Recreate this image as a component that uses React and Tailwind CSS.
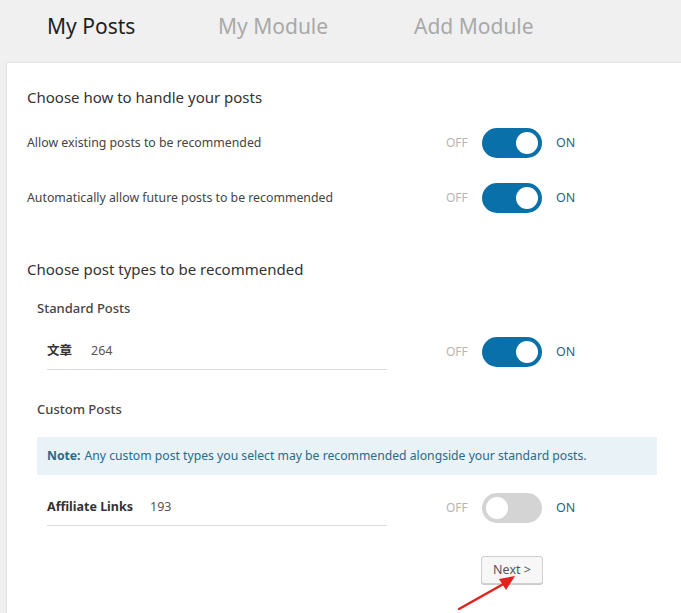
import React from "react";

function Toggle({ on }) {
  return (
    <div className="flex items-center w-[140px] shrink-0">
      <span className="text-[12px] text-[#b5b5b5] w-[36px]">OFF</span>
      <div
        className={
          on
            ? "relative w-[60px] h-[30px] rounded-full bg-[#0a70a9]"
            : "relative w-[60px] h-[30px] rounded-full bg-[#d4d4d4]"
        }
      >
        <div
          className={
            on
              ? "absolute top-[4px] right-[4px] w-[22px] h-[22px] rounded-full bg-white"
              : "absolute top-[4px] left-[4px] w-[22px] h-[22px] rounded-full bg-white"
          }
        ></div>
      </div>
      <span className="text-[12.5px] text-[#1f6585] ml-[14px]">ON</span>
    </div>
  );
}

export default function App() {
  return (
    <div
      className="relative min-h-screen bg-[#f0f0f0] flex flex-col overflow-hidden"
      style={{ fontFamily: '"Noto Sans", "Noto Sans CJK SC", sans-serif' }}
    >
      {/* tabs */}
      <div className="h-[62px] flex items-center pl-[47px] pb-[8px] text-[21px] shrink-0">
        <span className="text-[#1e1e1e] w-[171px]">My Posts</span>
        <span className="text-[#a9a9a9] w-[196px]">My Module</span>
        <span className="text-[#a9a9a9]">Add Module</span>
      </div>

      {/* panel */}
      <div className="flex-1 ml-[6px] bg-white border-l border-t border-[#e3e3e3] pl-[20px] pt-[24px] pb-10">
        <h2 className="h-5 leading-5 text-[15px] text-[#333]">Choose how to handle your posts</h2>

        <div className="flex items-center h-[30px] mt-[21px]">
          <div className="w-[419px] text-[12.3px] text-[#444]">Allow existing posts to be recommended</div>
          <Toggle on />
        </div>
        <div className="flex items-center h-[30px] mt-[25px]">
          <div className="w-[419px] text-[12.3px] text-[#444]">Automatically allow future posts to be recommended</div>
          <Toggle on />
        </div>

        <h2 className="h-5 leading-5 text-[15px] text-[#333] mt-[46px]">Choose post types to be recommended</h2>

        <div className="pl-[10px]">
          <h3 className="h-5 leading-5 text-[13px] font-medium text-[#444] mt-[19px]">Standard Posts</h3>

          <div className="flex items-center h-[36px] mt-[16px]">
            <div className="pl-[10px] w-[409px]">
              <div className="flex items-center h-[36px] w-[340px] border-b border-[#dcdcdc] text-[12.5px]">
                <span className="font-bold text-[#333] w-[44px]">文章</span>
                <span className="text-[#555]">264</span>
              </div>
            </div>
            <Toggle on />
          </div>

          <h3 className="h-5 leading-5 text-[13px] font-medium text-[#444] mt-[29px]">Custom Posts</h3>

          <div className="mt-[18px] h-[38px] w-[620px] bg-[#e8f2f7] flex items-center pl-[10px] text-[12.2px] text-[#2b6a8a]">
            <span className="font-bold mr-1">Note:</span>
            <span>Any custom post types you select may be recommended alongside your standard posts.</span>
          </div>

          <div className="flex items-center h-[36px] mt-[15px]">
            <div className="pl-[10px] w-[409px]">
              <div className="flex items-center h-[36px] w-[340px] border-b border-[#dcdcdc] text-[12.5px]">
                <span className="font-bold text-[#333] w-[103px]">Affiliate Links</span>
                <span className="text-[#555]">193</span>
              </div>
            </div>
            <Toggle />
          </div>

          <div className="mt-[30px] pl-[444px]">
            <button className="w-[62px] h-[28px] bg-[#f7f7f7] border border-[#cfcfcf] rounded-[3px] text-[12.5px] text-[#555] shadow-[0_1px_0_#ccc]">
              Next &gt;
            </button>
          </div>
        </div>
      </div>

      {/* annotation arrow */}
      <svg className="absolute left-[455px] top-[570px]" width="70" height="43" viewBox="0 0 70 43">
        <line x1="4" y1="39" x2="52" y2="12" stroke="#e3201b" strokeWidth="2.5" strokeLinecap="round" />
        <polygon points="60,6 44,9 51,20" fill="#e3201b" />
      </svg>
    </div>
  );
}
